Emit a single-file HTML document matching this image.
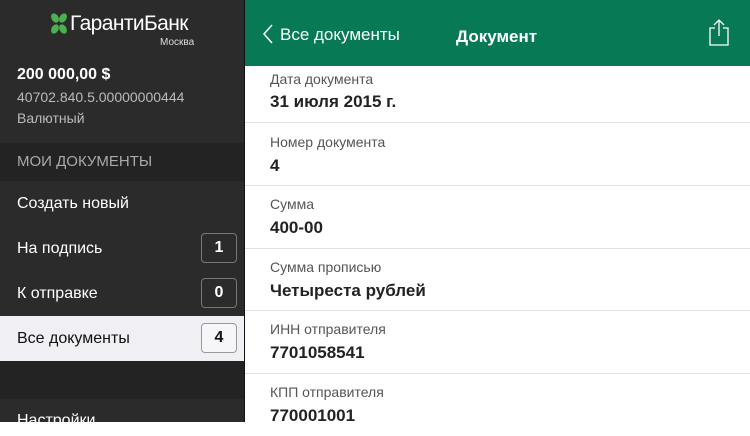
<!DOCTYPE html>
<html><head><meta charset="utf-8"><style>
*{margin:0;padding:0;box-sizing:border-box}
body{width:750px;height:422px;overflow:hidden;font-family:"Liberation Sans",sans-serif;background:#fff;position:relative}
.sb{position:absolute;left:0;top:0;width:245px;height:422px;background:#2b2b2b;color:#fff}
.abs{position:absolute}
.main{position:absolute;left:245px;top:0;width:505px;height:422px}
.hdr{position:absolute;left:0;top:0;width:505px;height:66px;background:#077a55;color:#fff}
.row{position:absolute;left:0;width:505px;height:63px;border-bottom:1px solid #e2e2e6}
.lbl{position:absolute;left:25px;font-size:14px;color:#555}
.val{position:absolute;left:25px;font-size:17px;font-weight:bold;color:#222}
.item{position:absolute;left:17px;font-size:16px}
.badge{position:absolute;left:201px;width:36px;height:30px;border:1px solid #777;border-radius:4px;font-size:16px;font-weight:bold;text-align:center;line-height:28px}
</style></head><body>
<div class="sb">
 <svg class="abs" style="left:48px;top:12px" width="22" height="24" viewBox="0 0 22 24">
  <g fill="#4caf50"><ellipse cx="7" cy="6" rx="3.5" ry="5" transform="rotate(-30 7 6)"/><ellipse cx="15" cy="6" rx="3.5" ry="5" transform="rotate(30 15 6)"/><ellipse cx="7" cy="17" rx="3.5" ry="5" transform="rotate(30 7 17)"/><ellipse cx="15" cy="17" rx="3.5" ry="5" transform="rotate(-30 15 17)"/></g></svg>
 <div class="abs" style="left:70px;top:12px;font-size:21px;letter-spacing:-0.6px">ГарантиБанк</div>
 <div class="abs" style="left:160px;top:37px;font-size:10px;color:#ddd">Москва</div>
 <div class="abs" style="left:17px;top:66px;font-size:16px;font-weight:bold">200 000,00 $</div>
 <div class="abs" style="left:17px;top:89px;font-size:14px;color:#bbb">40702.840.5.00000000444</div>
 <div class="abs" style="left:17px;top:110px;font-size:14px;color:#bbb">Валютный</div>
 <div class="abs" style="left:0;top:143px;width:245px;height:38px;background:#232323"></div>
 <div class="abs" style="left:17px;top:153px;font-size:15px;color:#aaa">МОИ ДОКУМЕНТЫ</div>
 <div class="item" style="top:195px">Создать новый</div>
 <div class="item" style="top:240px">На подпись</div>
 <div class="badge" style="top:233px">1</div>
 <div class="item" style="top:285px">К отправке</div>
 <div class="badge" style="top:278px">0</div>
 <div class="abs" style="left:0;top:316px;width:245px;height:45px;background:#efeff4"></div>
 <div class="item" style="top:330px;color:#111">Все документы</div>
 <div class="badge" style="top:323px;color:#111;background:#f6f6f8;border-color:#999">4</div>
 <div class="abs" style="left:0;top:361px;width:245px;height:38px;background:#232323"></div>
 <div class="item" style="top:412px">Настройки</div>
</div>
<div class="abs" style="left:244px;top:0;width:1px;height:422px;background:#111"></div>
<div class="main">
 <div class="hdr">
  <svg class="abs" style="left:17px;top:24px" width="12" height="20" viewBox="0 0 12 20"><path d="M10 1L2 10l8 9" stroke="#fff" stroke-width="1.5" fill="none"/></svg>
  <div class="abs" style="left:35px;top:25px;font-size:17px">Все документы</div>
  <div class="abs" style="left:211px;top:27px;font-size:17px;font-weight:bold">Документ</div>
  <svg class="abs" style="left:463px;top:18px" width="22" height="28" viewBox="0 0 22 28"><path d="M7 10H2v17h18V10h-5M11 18V2M6 7l5-5 5 5" stroke="#fff" stroke-width="1.3" fill="none"/></svg>
 </div>
 <div class="row" style="top:60px;height:63px"><div class="lbl" style="top:11px">Дата документа</div><div class="val" style="top:32px">31 июля 2015 г.</div></div>
 <div class="row" style="top:123px"><div class="lbl" style="top:11px">Номер документа</div><div class="val" style="top:33px">4</div></div>
 <div class="row" style="top:186px"><div class="lbl" style="top:10px">Сумма</div><div class="val" style="top:32px">400-00</div></div>
 <div class="row" style="top:248px"><div class="lbl" style="top:11px">Сумма прописью</div><div class="val" style="top:33px">Четыреста рублей</div></div>
 <div class="row" style="top:311px"><div class="lbl" style="top:10px">ИНН отправителя</div><div class="val" style="top:32px">7701058541</div></div>
 <div class="row" style="top:373px;border:none"><div class="lbl" style="top:11px">КПП отправителя</div><div class="val" style="top:33px">770001001</div></div>
</div>
</body></html>
